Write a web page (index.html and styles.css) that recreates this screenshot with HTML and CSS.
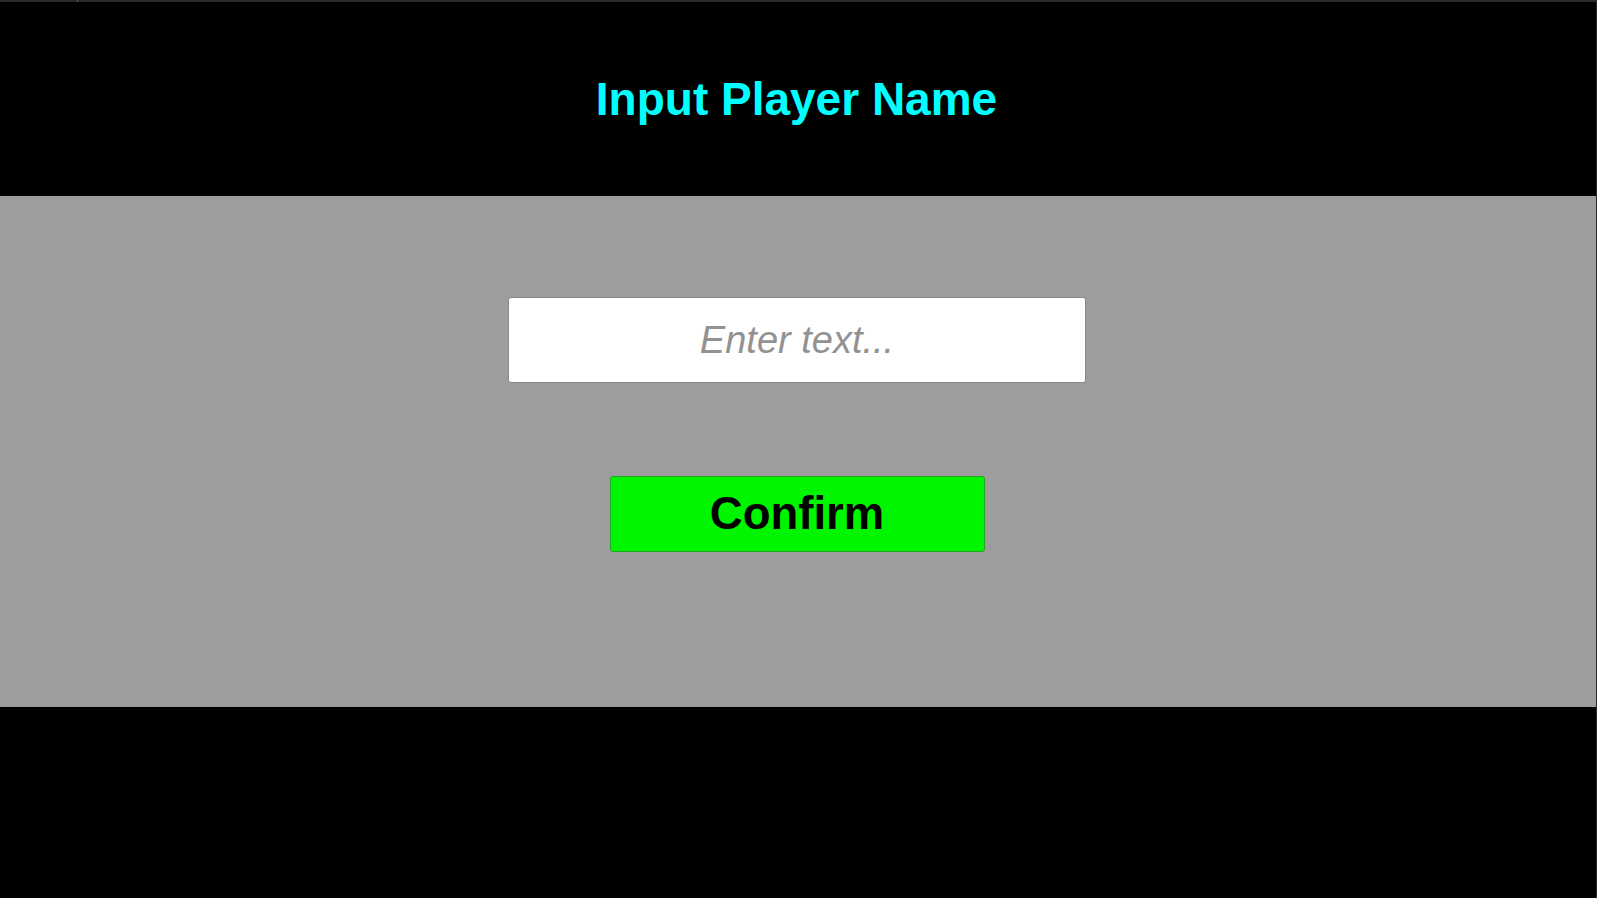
FILE: index.html
```html
<!DOCTYPE html>
<html lang="en">
<head>
<meta charset="utf-8">
<title>Input Player Name</title>
<link rel="stylesheet" href="styles.css">
</head>
<body>
<div class="screen">
  <div class="topline"><span class="tick"></span></div>
  <header class="header">
    <h1 class="title">Input Player Name</h1>
  </header>
  <main class="panel">
    <input class="name-input" type="text" placeholder="Enter text...">
    <button class="confirm" type="button">Confirm</button>
  </main>
  <div class="footer"></div>
</div>
</body>
</html>
```

FILE: styles.css
```css
html, body {
  margin: 0;
  padding: 0;
  height: 100%;
  background: #000;
}

.screen {
  width: 1596px;
  height: 898px;
  border-right: 1px solid #2a2a2a;
  display: flex;
  flex-direction: column;
  background: #000;
  font-family: "Liberation Sans", Arial, sans-serif;
}

.topline {
  height: 2px;
  background: #2a2a2a;
  position: relative;
  flex: none;
}

.tick {
  position: absolute;
  left: 77px;
  top: 0;
  width: 1px;
  height: 2px;
  background: #555;
}

.header {
  height: 194px;
  flex: none;
  display: flex;
  align-items: center;
  justify-content: center;
  padding-right: 3px;
  box-sizing: border-box;
}

.title {
  margin: 0;
  color: #00ffff;
  font-size: 46px;
  font-weight: 700;
  line-height: 1;
}

.panel {
  height: 511px;
  flex: none;
  background: #9d9d9d;
  display: flex;
  flex-direction: column;
  align-items: center;
  padding-top: 101px;
  padding-right: 2px;
  box-sizing: border-box;
}

.name-input {
  width: 578px;
  height: 86px;
  box-sizing: border-box;
  border: 1px solid #8a8a8a;
  border-radius: 3px;
  background: #fff;
  font-family: "Liberation Sans", Arial, sans-serif;
  font-size: 38px;
  font-style: italic;
  text-align: center;
  color: #333;
  outline: none;
  padding: 0;
  margin: 0;
}

.name-input::placeholder {
  color: #929292;
  font-style: italic;
  opacity: 1;
}

.confirm {
  margin-top: 93px;
  width: 375px;
  height: 76px;
  box-sizing: border-box;
  background: #00f500;
  border: 1px solid #22a822;
  border-radius: 3px;
  color: #000;
  font-family: "Liberation Sans", Arial, sans-serif;
  font-size: 45.5px;
  font-weight: 700;
  line-height: 1;
  padding: 0;
  cursor: pointer;
}

.footer {
  flex: 1;
  background: #000;
}
```
